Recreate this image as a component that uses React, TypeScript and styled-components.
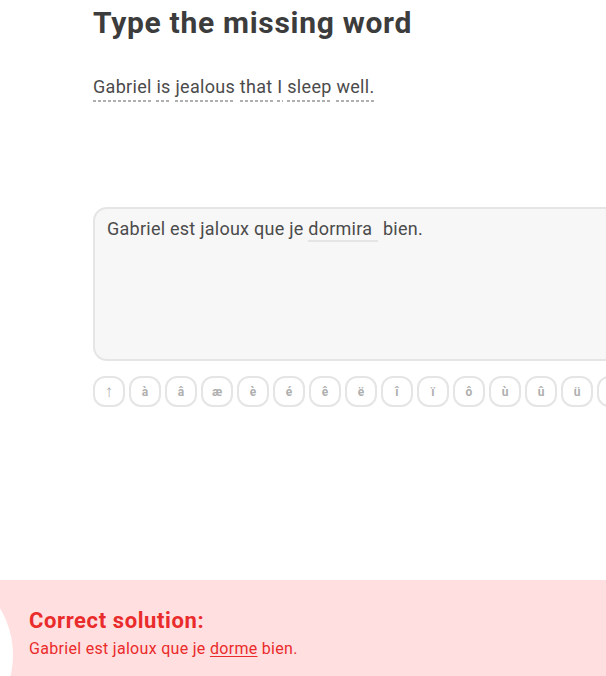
import React from "react";
import styled, { createGlobalStyle } from "styled-components";

const Global = createGlobalStyle`
  html, body { margin: 0; padding: 0; background: #fff; overflow: hidden; }
  body { font-family: Roboto, "Noto Sans", sans-serif; }
  * { box-sizing: border-box; }
`;

const Page = styled.div`
  display: flex;
  flex-direction: column;
  height: 676px;
  width: 606px;
  overflow: hidden;
`;

const Column = styled.main`
  display: flex;
  flex-direction: column;
  margin-left: 93px;
  width: 620px;
  flex-shrink: 0;
`;

const Title = styled.h1`
  margin: 4px 0 0;
  font-size: 30px;
  line-height: 38px;
  font-weight: 700;
  color: #3c3c3c;
  letter-spacing: 0.7px;
`;

const Prompt = styled.p`
  margin: 32px 0 0;
  font-size: 18px;
  line-height: 26px;
  letter-spacing: 0.3px;
  color: #4b4b4b;
  display: flex;
  flex-wrap: wrap;
`;

const Hint = styled.span`
  padding-bottom: 2px;
  background-image: repeating-linear-gradient(90deg, #afafaf 0 3px, transparent 3px 5px);
  background-size: 100% 2px;
  background-repeat: no-repeat;
  background-position: 0 100%;
`;

const Space = styled.span`
  white-space: pre;
`;

const AnswerBox = styled.div`
  margin-top: 105px;
  height: 154px;
  background: #f7f7f7;
  border: 2px solid #e5e5e5;
  border-radius: 14px;
  padding: 8px 12px;
  font-size: 18px;
  line-height: 24px;
  letter-spacing: 0.25px;
  color: #4b4b4b;
`;

const Blank = styled.span`
  display: inline-block;
  min-width: 70px;
  padding-right: 6px;
  border-bottom: 2px solid #e5e5e5;
  line-height: 22px;
`;

const Keys = styled.div`
  display: flex;
  gap: 4px;
  margin-top: 15px;
`;

const Key = styled.button<{ $thin?: boolean }>`
  flex-shrink: 0;
  width: 32px;
  height: 31px;
  border: 2px solid #e5e5e5;
  border-radius: 12px;
  background: #fff;
  color: #afafaf;
  font-family: Roboto, sans-serif;
  font-weight: ${(p) => (p.$thin ? 300 : 700)};
  font-size: ${(p) => (p.$thin ? "17px" : "12px")};
  padding: 0;
  display: flex;
  align-items: center;
  justify-content: center;
`;

const Footer = styled.footer`
  position: relative;
  margin-top: auto;
  height: 96px;
  background: #ffdfe0;
  padding: 27px 0 0 29px;
  overflow: hidden;
  color: #ea2b2b;
`;

const Badge = styled.div`
  position: absolute;
  left: -169px;
  top: -16px;
  width: 182px;
  height: 182px;
  border-radius: 50%;
  background: #fff;
`;

const SolutionTitle = styled.h2`
  position: relative;
  margin: 0;
  font-size: 22px;
  line-height: 27px;
  font-weight: 700;
  letter-spacing: 0.6px;
`;

const SolutionText = styled.p`
  position: relative;
  margin: 5px 0 0;
  font-size: 16px;
  line-height: 20px;
  letter-spacing: 0.3px;
`;

const Fix = styled.span`
  text-decoration: underline;
  text-underline-offset: 2px;
`;

const hints = ["Gabriel", "is", "jealous", "that", "I", "sleep", "well."];
const keys = ["à", "â", "æ", "è", "é", "ê", "ë", "î", "ï", "ô", "ù", "û", "ü", "ç", "œ"];

export default function App() {
  return (
    <Page>
      <Global />
      <Column>
        <Title>Type the missing word</Title>
        <Prompt>
          {hints.map((w, i) => (
            <React.Fragment key={w}>
              {i > 0 && <Space> </Space>}
              <Hint>{w}</Hint>
            </React.Fragment>
          ))}
        </Prompt>
        <AnswerBox>
          Gabriel est jaloux que je <Blank>dormira</Blank> bien.
        </AnswerBox>
        <Keys>
          <Key $thin>↑</Key>
          {keys.map((k) => (
            <Key key={k}>{k}</Key>
          ))}
        </Keys>
      </Column>
      <Footer>
        <Badge />
        <SolutionTitle>Correct solution:</SolutionTitle>
        <SolutionText>
          Gabriel est jaloux que je <Fix>dorme</Fix> bien.
        </SolutionText>
      </Footer>
    </Page>
  );
}
